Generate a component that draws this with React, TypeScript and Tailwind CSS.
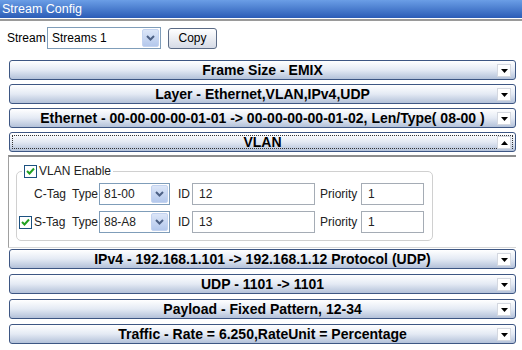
import React from "react";

const bars1 = ["Frame Size - EMIX", "Layer - Ethernet,VLAN,IPv4,UDP", "Ethernet - 00-00-00-00-01-01 -> 00-00-00-00-01-02, Len/Type( 08-00 )"];
const bars2 = ["IPv4 - 192.168.1.101 -> 192.168.1.12 Protocol (UDP)", "UDP - 1101 -> 1101", "Payload - Fixed Pattern, 12-34", "Traffic - Rate = 6.250,RateUnit = Percentage"];

function Arrow({ up }: { up?: boolean }) {
    return (
        <div className="absolute right-[4px] top-[3px] w-[14px] h-[13px] bg-white border border-[#d4d8e0] flex items-center justify-center">
            <svg width="7" height="4" viewBox="0 0 7 4">
                {up ? <path d="M0 4 L3.5 0 L7 4 Z" fill="#000" /> : <path d="M0 0 L7 0 L3.5 4 Z" fill="#000" />}
            </svg>
        </div>
    );
}

function Bar({ label, open }: { label: string; open?: boolean }) {
    return (
        <div className="relative h-[20px] rounded-[3px] border border-[#3d5683] bg-gradient-to-b from-[#ffffff] via-[#e4eaf4] to-[#b3c1d9] flex items-center justify-center">
            {open && <div className="absolute inset-[2px] border border-dotted border-[#333]" />}
            <span className="text-[14px] font-bold text-black leading-none">{label}</span>
            <Arrow up={open} />
        </div>
    );
}

function Check() {
    return (
        <div className="w-[13px] h-[13px] border border-[#1c5180] bg-white flex items-center justify-center">
            <svg width="9" height="8" viewBox="0 0 9 8">
                <path d="M1 4 L3.5 6.5 L8 1.5" fill="none" stroke="#21a121" strokeWidth="2" />
            </svg>
        </div>
    );
}

function Select({ value, w }: { value: string; w: string }) {
    return (
        <div className={`${w} h-[22px] border border-[#7f9db9] bg-white flex items-center justify-between pl-[4px] pr-[1px]`}>
            <span className="text-[12px]">{value}</span>
            <div className="w-[17px] h-[18px] rounded-[2px] bg-gradient-to-b from-[#dce6f8] to-[#b4c8ec] border border-[#c3d3f0] flex items-center justify-center">
                <svg width="9" height="6" viewBox="0 0 9 6">
                    <path d="M1 1 L4.5 4.5 L8 1" fill="none" stroke="#4d6185" strokeWidth="2" />
                </svg>
            </div>
        </div>
    );
}

function Input({ value, w }: { value: string; w: string }) {
    return (
        <div className={`${w} h-[22px] border border-[#a5acb5] bg-white flex items-center pl-[6px] text-[12px]`}>
            {value}
        </div>
    );
}

function TagRow({ label, type, id, checked }: { label: string; type: string; id: string; checked?: boolean }) {
    return (
        <div className="flex items-center text-[12px] text-[#222]">
            <div className="w-[14px]">{checked && <Check />}</div>
            <span className="w-[39px] pl-[1px]">{label}</span>
            <span className="w-[27px]">Type</span>
            <Select value={type} w="w-[71px]" />
            <span className="w-[22px] pl-[8px]">ID</span>
            <Input value={id} w="w-[123px]" />
            <span className="w-[46px] pl-[5px]">Priority</span>
            <Input value="1" w="w-[63px]" />
        </div>
    );
}

export default function App() {
    return (
        <div className="w-[522px] h-[350px] bg-white overflow-hidden" style={{ fontFamily: '"Liberation Sans", Arial, sans-serif' }}>
            <div className="h-[18px] bg-gradient-to-b from-[#6b9ee6] to-[#2b5cb6] text-white text-[12.5px] leading-[18px] pl-[2px]">
                Stream Config
            </div>
            <div className="h-[1px] bg-white" />
            <div className="h-[2px] bg-[#9a9a9a]" />

            <div className="flex items-center mt-[6px] pl-[7px] h-[22px]">
                <span className="text-[12px] w-[40px]">Stream</span>
                <Select value="Streams 1" w="w-[114px]" />
                <button className="ml-[7px] w-[49px] h-[21px] rounded-[3px] border border-[#5b6b86] bg-gradient-to-b from-white to-[#d6dbe6] text-[12px]">
                    Copy
                </button>
            </div>

            <div className="flex flex-col gap-[4px] mt-[11px] pl-[9px] pr-[6px]">
                {bars1.map((b) => (
                    <Bar key={b} label={b} />
                ))}
                <Bar label="VLAN" open />
            </div>

            <div className="mt-[3px] ml-[8px] mr-[6px] h-[93px] border-t-2 border-l border-t-[#8c8c8c] border-l-[#a0a0a0] border-b border-b-[#d8d8d8] pl-[7px] pt-[5px]">
                <fieldset className="w-[417px] border border-[#d0d0d0] rounded-[5px] pl-[2px] pr-[8px] pb-[7px]">
                    <legend className="ml-[3px] px-[2px] flex items-center gap-[2px] text-[12px] text-[#222]">
                        <Check />
                        <span>VLAN Enable</span>
                    </legend>
                    <div className="flex flex-col gap-[6px] mt-[3px]">
                        <TagRow label="C-Tag" type="81-00" id="12" />
                        <TagRow label="S-Tag" type="88-A8" id="13" checked />
                    </div>
                </fieldset>
            </div>

            <div className="flex flex-col gap-[5px] mt-[1px] pl-[9px] pr-[6px]">
                {bars2.map((b) => (
                    <Bar key={b} label={b} />
                ))}
            </div>
        </div>
    );
}
